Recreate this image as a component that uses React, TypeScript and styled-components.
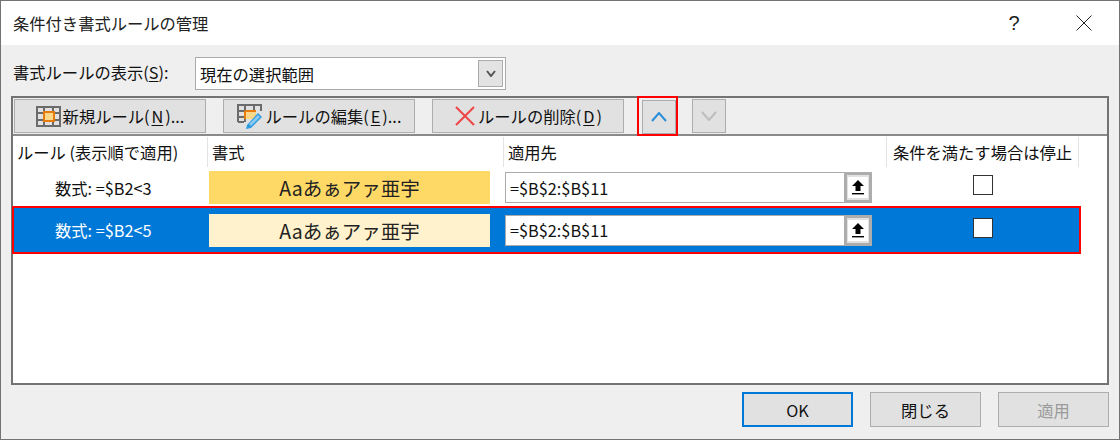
import styled, { createGlobalStyle } from 'styled-components'

const FONT = '"Noto Sans CJK JP", "Noto Sans", sans-serif'

const GlobalStyle = createGlobalStyle`
    html, body {
        margin: 0;
        padding: 0;
        background: #efefef;
    }
    * {
        box-sizing: border-box;
    }
`

const Dialog = styled.div`
    width: 1120px;
    height: 440px;
    display: flex;
    flex-direction: column;
    background: #efefef;
    border: 1px solid #737373;
    font-family: ${FONT};
    font-size: 17px;
    color: #111;
    overflow: hidden;
`

const TitleBar = styled.div`
    height: 44px;
    flex: none;
    display: flex;
    align-items: center;
    background: #fff;
    padding-left: 12px;
`

const Title = styled.div`
    flex: 1;
    font-size: 16.3px;
    color: #222;
`

const HelpMark = styled.div`
    width: 70px;
    text-align: center;
    font-size: 20px;
    color: #222;
    font-family: "Liberation Sans", sans-serif;
`

const CloseMark = styled.div`
    width: 70px;
    display: flex;
    justify-content: center;
`

const FilterRow = styled.div`
    height: 33px;
    margin: 12px 0 6px 12px;
    display: flex;
    align-items: center;
`

const FilterLabel = styled.label`
    width: 182px;
    font-size: 16.3px;
    padding-bottom: 4px;
`

const Select = styled.div`
    width: 311px;
    height: 33px;
    display: flex;
    align-items: center;
    justify-content: space-between;
    background: #fff;
    border: 1px solid #ababab;
    padding: 2px;
    padding-left: 4px;
    font-size: 16.3px;
`

const SelectArrow = styled.div`
    width: 25px;
    height: 27px;
    display: flex;
    align-items: center;
    justify-content: center;
    background: #e3e3e3;
    border: 1px solid #ababab;
`

const Panel = styled.div`
    width: 1098px;
    height: 289px;
    margin-left: 10px;
    display: flex;
    flex-direction: column;
    background: #fff;
    border: 2px solid #737373;
`

const Toolbar = styled.div`
    height: 38px;
    flex: none;
    display: flex;
    align-items: flex-start;
    padding: 1px 0 0 1px;
    background: #efefef;
    border-bottom: 2px solid #8a8a8a;
`

const ToolButton = styled.div<{ $gap?: number }>`
    width: 192px;
    height: 34px;
    flex: none;
    display: flex;
    align-items: center;
    justify-content: center;
    gap: 2px;
    margin-right: ${(p) => p.$gap ?? 17}px;
    background: #e1e1e1;
    border: 1px solid #adadad;
    font-size: 16.3px;
    color: #111;
    white-space: nowrap;
`

const MoveHighlight = styled.div`
    width: 41px;
    height: 40px;
    flex: none;
    margin: -3px 14px 0 -4px;
    padding: 2px 0 0 3px;
    border: 2px solid #ff0000;
    position: relative;
    z-index: 1;
`

const MoveButton = styled.div`
    width: 34px;
    height: 34px;
    flex: none;
    display: flex;
    align-items: center;
    justify-content: center;
    background: #e1e1e1;
    border: 1px solid #adadad;
`

const HeaderRow = styled.div`
    height: 30px;
    flex: none;
    margin-top: 1px;
    display: grid;
    grid-template-columns: 195px 296px 383px 192px;
    font-size: 16.3px;
`

const HeaderCell = styled.div<{ $centered?: boolean }>`
    display: flex;
    align-items: center;
    padding-left: ${(p) => (p.$centered ? 0 : 4)}px;
    justify-content: ${(p) => (p.$centered ? 'center' : 'flex-start')};
    border-right: 1px solid #e3e3e3;
    white-space: nowrap;
`

const RuleRow = styled.div<{ $selected?: boolean }>`
    width: 1069px;
    height: ${(p) => (p.$selected ? 48 : 39)}px;
    margin-left: -1px;
    padding-top: ${(p) => (p.$selected ? 0 : 2)}px;
    display: grid;
    grid-template-columns: 195px 296px 382px 192px;
    align-items: center;
    background: ${(p) => (p.$selected ? '#0078d7' : 'transparent')};
    border: 2px solid ${(p) => (p.$selected ? '#ff0000' : 'transparent')};
    color: ${(p) => (p.$selected ? '#fff' : '#111')};
    position: relative;
    z-index: 1;
`

const RuleText = styled.div`
    padding-left: 41px;
    font-size: 16.3px;
    white-space: nowrap;
`

const Swatch = styled.div<{ $color: string }>`
    width: 281px;
    height: 33px;
    display: flex;
    align-items: center;
    justify-content: center;
    background: ${(p) => p.$color};
    color: #222;
    font-size: 19.5px;
    white-space: nowrap;
`

const RangeBox = styled.div`
    width: 367px;
    height: 31px;
    display: flex;
    align-items: center;
    justify-content: space-between;
    background: #fff;
    border: 1px solid #ababab;
    padding-left: 4px;
    color: #111;
    font-size: 16.3px;
`

const RangeButton = styled.div`
    width: 28px;
    height: 31px;
    margin: -1px -1px -1px 0;
    display: flex;
    align-items: center;
    justify-content: center;
    background: #e1e1e1;
    border: 3px solid #adadad;
`

const RangeGlyph = styled.div`
    width: 20px;
    height: 21px;
    display: flex;
    align-items: center;
    justify-content: center;
    background: #fff;
`

const StopCell = styled.div`
    display: flex;
    justify-content: center;
    margin-top: -5px;
`

const CheckBox = styled.div`
    width: 20px;
    height: 20px;
    background: #fff;
    border: 1px solid #333;
`

const Footer = styled.div`
    display: flex;
    justify-content: flex-end;
    gap: 17px;
    padding: 7px 10px 0 0;
`

const FooterButton = styled.div<{ $primary?: boolean; $disabled?: boolean }>`
    width: 111px;
    height: 35px;
    display: flex;
    align-items: center;
    justify-content: center;
    background: #e1e1e1;
    border: ${(p) => (p.$primary ? '2px solid #0078d7' : '1px solid #adadad')};
    color: ${(p) => (p.$disabled ? '#9a9a9a' : '#111')};
    font-size: 16.3px;
`

const Key = styled.span`
    text-decoration: underline;
    text-underline-offset: 2px;
`

const GridIcon = () => (
    <svg width="25" height="21" viewBox="0 0 25 21">
        <rect x="8" y="6" width="10" height="9" fill="#fbd78a" />
        <g fill="none" stroke="#6b6b6b" strokeWidth="2">
            <rect x="1" y="1" width="23" height="19" />
            <path d="M1 7h23M1 14h23M8 1v19M17 1v19" />
        </g>
        <rect x="8" y="6" width="10" height="9" fill="#fbd78a" stroke="#e87d0d" strokeWidth="2" />
    </svg>
)

const EditIcon = () => (
    <svg width="27" height="27" viewBox="0 0 27 27">
        <rect x="8" y="8" width="11" height="8" fill="#fbd78a" />
        <g fill="none" stroke="#6b6b6b" strokeWidth="2">
            <path d="M1 19V2h23v6M1 8h16M1 14h6M8 2v17M1 19h6M17 2v6" />
        </g>
        <path d="M8 8h11M8 8v8" fill="none" stroke="#e87d0d" strokeWidth="2" />
        <path d="M10 22 L21 10 L25 14 L14 25 L9 26 Z" fill="#2d9be0" />
        <path d="M12 21 L21 12 L23 14 L14 23 Z" fill="#8cc9ee" />
    </svg>
)

const DeleteIcon = () => (
    <svg width="22" height="22" viewBox="0 0 22 22">
        <path d="M2 2 L20 20 M20 2 L2 20" stroke="#ee4444" strokeWidth="2" fill="none" />
    </svg>
)

const Chevron = ({ up, color, size }: { up?: boolean; color: string; size: number }) => (
    <svg width={size} height={size / 2 + 2} viewBox={`0 0 ${size} ${size / 2 + 2}`}>
        <path
            d={up ? `M1 ${size / 2 + 1} L${size / 2} 1 L${size - 1} ${size / 2 + 1}` : `M1 1 L${size / 2} ${size / 2 + 1} L${size - 1} 1`}
            fill="none"
            stroke={color}
            strokeWidth="2"
        />
    </svg>
)

const UploadGlyph = () => (
    <svg width="12" height="15" viewBox="0 0 12 15">
        <path d="M6 0 L12 6 H8.5 V11 H3.5 V6 H0 Z" fill="#000" />
        <rect x="0" y="13" width="12" height="1.4" fill="#000" />
    </svg>
)

const RangeField = () => (
    <RangeBox>
        =$B$2:$B$11
        <RangeButton>
            <RangeGlyph>
                <UploadGlyph />
            </RangeGlyph>
        </RangeButton>
    </RangeBox>
)

export default function App() {
    return (
        <>
            <GlobalStyle />
            <Dialog>
                <TitleBar>
                    <Title>条件付き書式ルールの管理</Title>
                    <HelpMark>?</HelpMark>
                    <CloseMark>
                        <svg width="16" height="16" viewBox="0 0 16 16">
                            <path d="M0.5 0.5 L15.5 15.5 M15.5 0.5 L0.5 15.5" stroke="#222" strokeWidth="1" fill="none" />
                        </svg>
                    </CloseMark>
                </TitleBar>
                <FilterRow>
                    <FilterLabel>
                        書式ルールの表示(<Key>S</Key>):
                    </FilterLabel>
                    <Select>
                        現在の選択範囲
                        <SelectArrow>
                            <Chevron color="#555" size={10} />
                        </SelectArrow>
                    </Select>
                </FilterRow>
                <Panel>
                    <Toolbar>
                        <ToolButton>
                            <GridIcon />
                            新規ルール(<Key>N</Key>)...
                        </ToolButton>
                        <ToolButton>
                            <EditIcon />
                            ルールの編集(<Key>E</Key>)...
                        </ToolButton>
                        <ToolButton>
                            <DeleteIcon />
                            ルールの削除(<Key>D</Key>)
                        </ToolButton>
                        <MoveHighlight>
                            <MoveButton>
                                <Chevron up color="#2a8fd8" size={16} />
                            </MoveButton>
                        </MoveHighlight>
                        <MoveButton>
                            <Chevron color="#bdbdbd" size={16} />
                        </MoveButton>
                    </Toolbar>
                    <HeaderRow>
                        <HeaderCell>ルール (表示順で適用)</HeaderCell>
                        <HeaderCell>書式</HeaderCell>
                        <HeaderCell>適用先</HeaderCell>
                        <HeaderCell $centered>条件を満たす場合は停止</HeaderCell>
                    </HeaderRow>
                    <RuleRow>
                        <RuleText>数式: =$B2&lt;3</RuleText>
                        <Swatch $color="#ffd966">Aaあぁアァ亜宇</Swatch>
                        <RangeField />
                        <StopCell>
                            <CheckBox />
                        </StopCell>
                    </RuleRow>
                    <RuleRow $selected>
                        <RuleText>数式: =$B2&lt;5</RuleText>
                        <Swatch $color="#fff2cc">Aaあぁアァ亜宇</Swatch>
                        <RangeField />
                        <StopCell>
                            <CheckBox />
                        </StopCell>
                    </RuleRow>
                </Panel>
                <Footer>
                    <FooterButton $primary>OK</FooterButton>
                    <FooterButton>閉じる</FooterButton>
                    <FooterButton $disabled>適用</FooterButton>
                </Footer>
            </Dialog>
        </>
    )
}
